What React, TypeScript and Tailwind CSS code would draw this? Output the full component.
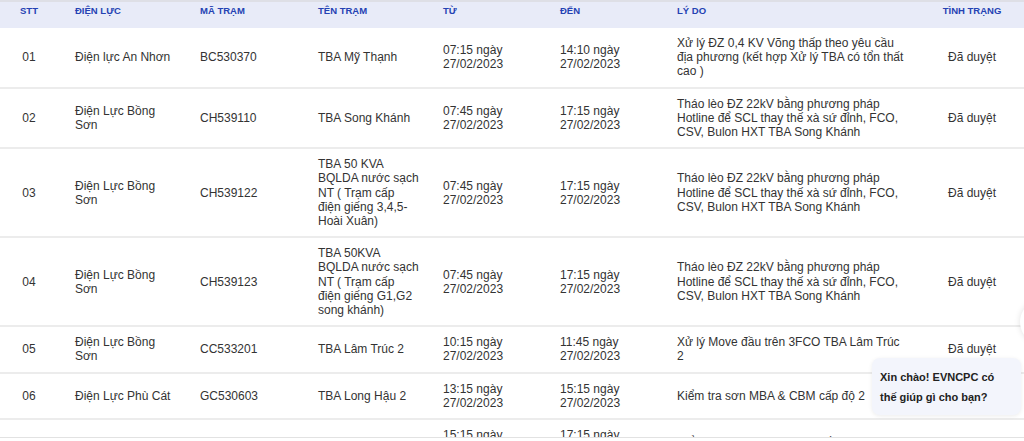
const HEADERS = ["STT", "ĐIỆN LỰC", "MÃ TRẠM", "TÊN TRẠM", "TỪ", "ĐẾN", "LÝ DO", "TÌNH TRẠNG"]

const REASON_HOTLINE = [
  "Tháo lèo ĐZ 22kV bằng phương pháp",
  "Hotline để SCL thay thế xà sứ đỉnh, FCO,",
  "CSV, Bulon HXT TBA Song Khánh",
]

const ROWS = [
  {
    stt: "01",
    unit: ["Điện lực An Nhơn"],
    code: "BC530370",
    station: ["TBA Mỹ Thạnh"],
    from: "07:15",
    to: "14:10",
    reason: ["Xử lý ĐZ 0,4 KV Võng thấp theo yêu cầu", "địa phương (kết hợp Xử lý TBA có tổn thất", "cao )"],
  },
  {
    stt: "02",
    unit: ["Điện Lực Bồng", "Sơn"],
    code: "CH539110",
    station: ["TBA Song Khánh"],
    from: "07:45",
    to: "17:15",
    reason: REASON_HOTLINE,
  },
  {
    stt: "03",
    unit: ["Điện Lực Bồng", "Sơn"],
    code: "CH539122",
    station: ["TBA 50 KVA", "BQLDA nước sạch", "NT ( Trạm cấp", "điện giếng 3,4,5-", "Hoài Xuân)"],
    from: "07:45",
    to: "17:15",
    reason: REASON_HOTLINE,
  },
  {
    stt: "04",
    unit: ["Điện Lực Bồng", "Sơn"],
    code: "CH539123",
    station: ["TBA 50KVA", "BQLDA nước sạch", "NT ( Trạm cấp", "điện giếng G1,G2", "song khánh)"],
    from: "07:45",
    to: "17:15",
    reason: REASON_HOTLINE,
  },
  {
    stt: "05",
    unit: ["Điện Lực Bồng", "Sơn"],
    code: "CC533201",
    station: ["TBA Lâm Trúc 2"],
    from: "10:15",
    to: "11:45",
    reason: ["Xử lý Move đầu trên 3FCO TBA Lâm Trúc", "2"],
  },
  {
    stt: "06",
    unit: ["Điện Lực Phù Cát"],
    code: "GC530603",
    station: ["TBA Long Hậu 2"],
    from: "13:15",
    to: "15:15",
    reason: ["Kiểm tra sơn MBA & CBM cấp độ 2"],
  },
  {
    stt: "07",
    unit: ["Điện Lực Phù Cát"],
    code: "GC530604",
    station: ["TBA Long Hậu 3"],
    from: "15:15",
    to: "17:15",
    reason: ["Kiểm tra sơn MBA & CBM cấp độ 2"],
  },
]

const GRID = "grid grid-cols-[75px_125px_118px_125px_117px_117px_253px_94px]"

const Lines = ({ lines }: { lines: string[] }) => (
  <div className="whitespace-nowrap">
    {lines.map((l, i) => (
      <div key={i}>{l}</div>
    ))}
  </div>
)

const App = () => {
  return (
    <div className="relative w-[1024px] h-[441px] bg-white overflow-hidden font-['Liberation_Sans',Arial,sans-serif]">
      <div className="h-[438px] overflow-hidden border-b border-[#e2e2e2]">
        <div className={`${GRID} border-t-2 border-[#dedfe6] bg-[#e8ebf8] pt-[3px] pb-[11px] text-[9.5px] leading-[12px] font-bold text-[#2442b3]`}>
          {HEADERS.map((h, i) => (
            <div
              key={h}
              className={i === 0 ? "text-center pr-[17px]" : i === 7 ? "text-center pr-[10px]" : ""}
            >
              {h}
            </div>
          ))}
        </div>

        {ROWS.map((r) => (
          <div
            key={r.stt}
            className={`${GRID} py-2 border-b-2 border-[#ececec] text-[12px] leading-[14.2px] text-[#333]`}
          >
            <div className="flex items-center justify-center pr-[17px]">{r.stt}</div>
            <div className="flex items-center"><Lines lines={r.unit} /></div>
            <div className="flex items-center">{r.code}</div>
            <div className="flex items-center"><Lines lines={r.station} /></div>
            <div className="flex items-center"><Lines lines={[r.from + " ngày", "27/02/2023"]} /></div>
            <div className="flex items-center"><Lines lines={[r.to + " ngày", "27/02/2023"]} /></div>
            <div className="flex items-center"><Lines lines={r.reason} /></div>
            <div className="flex items-center justify-center pr-[10px]">Đã duyệt</div>
          </div>
        ))}
      </div>

      {/* chat greeting bubble */}
      <div className="absolute left-[872px] top-[358px] w-[149px] rounded-lg bg-[#f3f5fc] shadow-[0_1px_4px_rgba(0,0,0,0.08)] pl-[8px] pt-[9px] pb-[8px] text-[11px] leading-[20px] font-bold text-[#222]">
        Xin chào! EVNCPC có
        <br />
        thế giúp gì cho bạn?
      </div>
      <div className="absolute right-[-40px] top-[300px] w-[44px] h-[44px] rounded-full bg-white shadow-[0_0_6px_rgba(0,0,0,0.12)]" />
    </div>
  )
}

export default App
